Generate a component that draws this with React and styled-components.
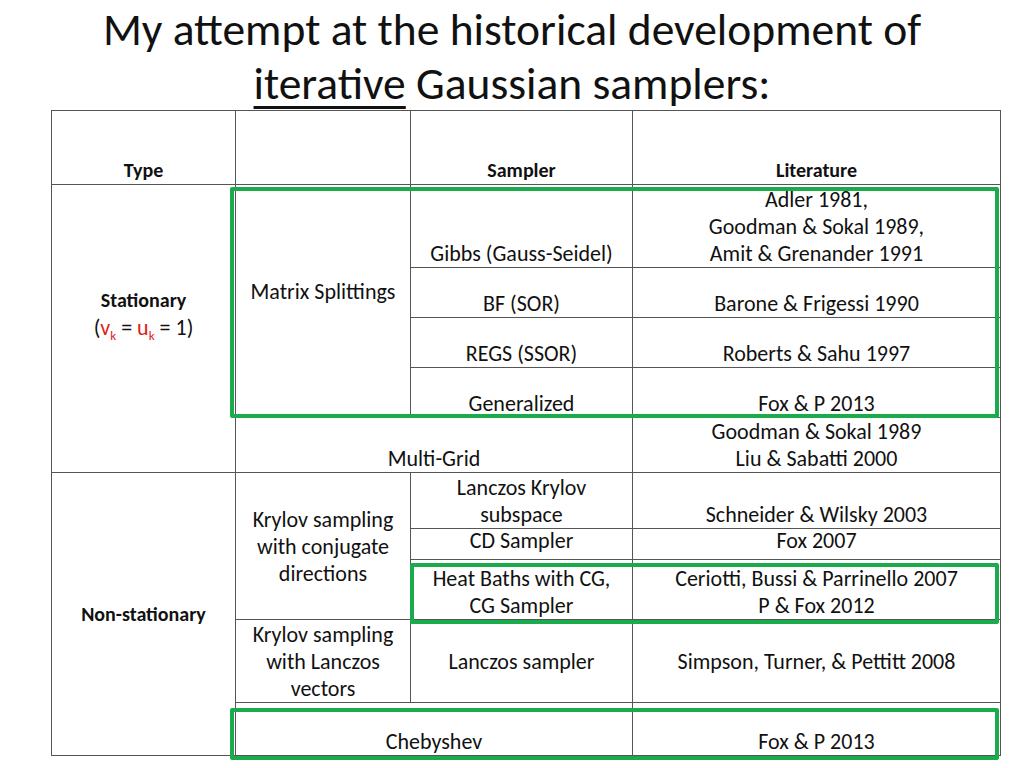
import React from 'react';
import styled, { createGlobalStyle } from 'styled-components';

const Global = createGlobalStyle`
  html, body { margin: 0; padding: 0; background: #fff; }
  body { font-family: Carlito, "Liberation Sans Narrow", "Open Sans", sans-serif; color: #111; }
`;

const Slide = styled.div`
  position: relative;
  width: 1024px;
  height: 768px;
  overflow: hidden;
`;

const Title = styled.h1`
  margin: 0;
  padding-top: 3px;
  height: 107px;
  text-align: center;
  font-weight: normal;
  font-size: 45.5px;
  line-height: 54px;
  u { text-decoration-thickness: 3px; text-underline-offset: 7px; }
`;

const Table = styled.table`
  margin-left: 51px;
  border-collapse: collapse;
  table-layout: fixed;
  width: 949px;
  font-size: 22px;
  line-height: 27px;
  sub { line-height: 0; font-size: 13px; }
`;

const Cell = styled.td`
  border: 1px solid #555;
  text-align: center;
  vertical-align: ${p => p.$v || 'bottom'};
  padding: 0 2px 0;
  height: ${p => p.$h}px;
  font-weight: ${p => (p.$bold ? 'bold' : 'normal')};
  font-size: ${p => (p.$bold ? '20px' : 'inherit')};
  white-space: nowrap;
`;

const Clip = styled.div`
  height: 30px;
  overflow: hidden;
  display: flex;
  align-items: flex-end;
  justify-content: center;
  line-height: 37px;
`;

const Red = styled.span`
  color: #e02020;
`;

const Box = styled.div`
  position: absolute;
  border: 4px solid #1aab4c;
  border-radius: 2px;
  pointer-events: none;
`;

export default function App() {
  return (
    <Slide>
      <Global />
      <Title>
        My attempt at the historical development of
        <br />
        <u>iterative</u> Gaussian samplers:
      </Title>
      <Table>
        <colgroup>
          <col style={{ width: 184 }} />
          <col style={{ width: 175 }} />
          <col style={{ width: 222 }} />
          <col style={{ width: 368 }} />
        </colgroup>
        <tbody>
          <tr>
            <Cell $h={73} $bold>Type</Cell>
            <Cell />
            <Cell $bold>Sampler</Cell>
            <Cell $bold>Literature</Cell>
          </tr>
          <tr>
            <Cell rowSpan={5} $v="middle" style={{ paddingBottom: 30 }}>
              <b style={{ fontSize: 20 }}>Stationary</b>
              <br />(<Red>v<sub>k</sub></Red> = <Red>u<sub>k</sub></Red> = 1)
            </Cell>
            <Cell rowSpan={4} $v="middle" style={{ paddingBottom: 20 }}>Matrix Splittings</Cell>
            <Cell $h={82}>Gibbs (Gauss-Seidel)</Cell>
            <Cell>Adler 1981,<br />Goodman &amp; Sokal 1989,<br />Amit &amp; Grenander 1991</Cell>
          </tr>
          <tr>
            <Cell $h={49}>BF (SOR)</Cell>
            <Cell>Barone &amp; Frigessi 1990</Cell>
          </tr>
          <tr>
            <Cell $h={49}>REGS (SSOR)</Cell>
            <Cell>Roberts &amp; Sahu 1997</Cell>
          </tr>
          <tr>
            <Cell $h={49}>Generalized</Cell>
            <Cell>Fox &amp; P 2013</Cell>
          </tr>
          <tr>
            <Cell colSpan={2} $h={53}>Multi-Grid</Cell>
            <Cell>Goodman &amp; Sokal 1989<br />Liu &amp; Sabatti 2000</Cell>
          </tr>
          <tr>
            <Cell rowSpan={5} $v="middle" $bold>Non-stationary</Cell>
            <Cell rowSpan={3} $v="middle">Krylov sampling<br />with conjugate<br />directions</Cell>
            <Cell $h={55}>Lanczos Krylov<br />subspace</Cell>
            <Cell>Schneider &amp; Wilsky 2003</Cell>
          </tr>
          <tr>
            <Cell $h={30} style={{ padding: 0 }}><Clip>CD Sampler</Clip></Cell>
            <Cell style={{ padding: 0 }}><Clip>Fox 2007</Clip></Cell>
          </tr>
          <tr>
            <Cell $h={59}>Heat Baths with CG,<br />CG Sampler</Cell>
            <Cell>Ceriotti, Bussi &amp; Parrinello 2007<br />P &amp; Fox 2012</Cell>
          </tr>
          <tr>
            <Cell $v="middle" $h={82}>Krylov sampling<br />with Lanczos<br />vectors</Cell>
            <Cell $v="middle">Lanczos sampler</Cell>
            <Cell $v="middle">Simpson, Turner, &amp; Pettitt 2008</Cell>
          </tr>
          <tr>
            <Cell colSpan={2} $h={52}>Chebyshev</Cell>
            <Cell>Fox &amp; P 2013</Cell>
          </tr>
        </tbody>
      </Table>
      <Box style={{ left: 230, top: 187, width: 761, height: 223 }} />
      <Box style={{ left: 410, top: 563, width: 581, height: 53 }} />
      <Box style={{ left: 230, top: 708, width: 761, height: 44 }} />
    </Slide>
  );
}
